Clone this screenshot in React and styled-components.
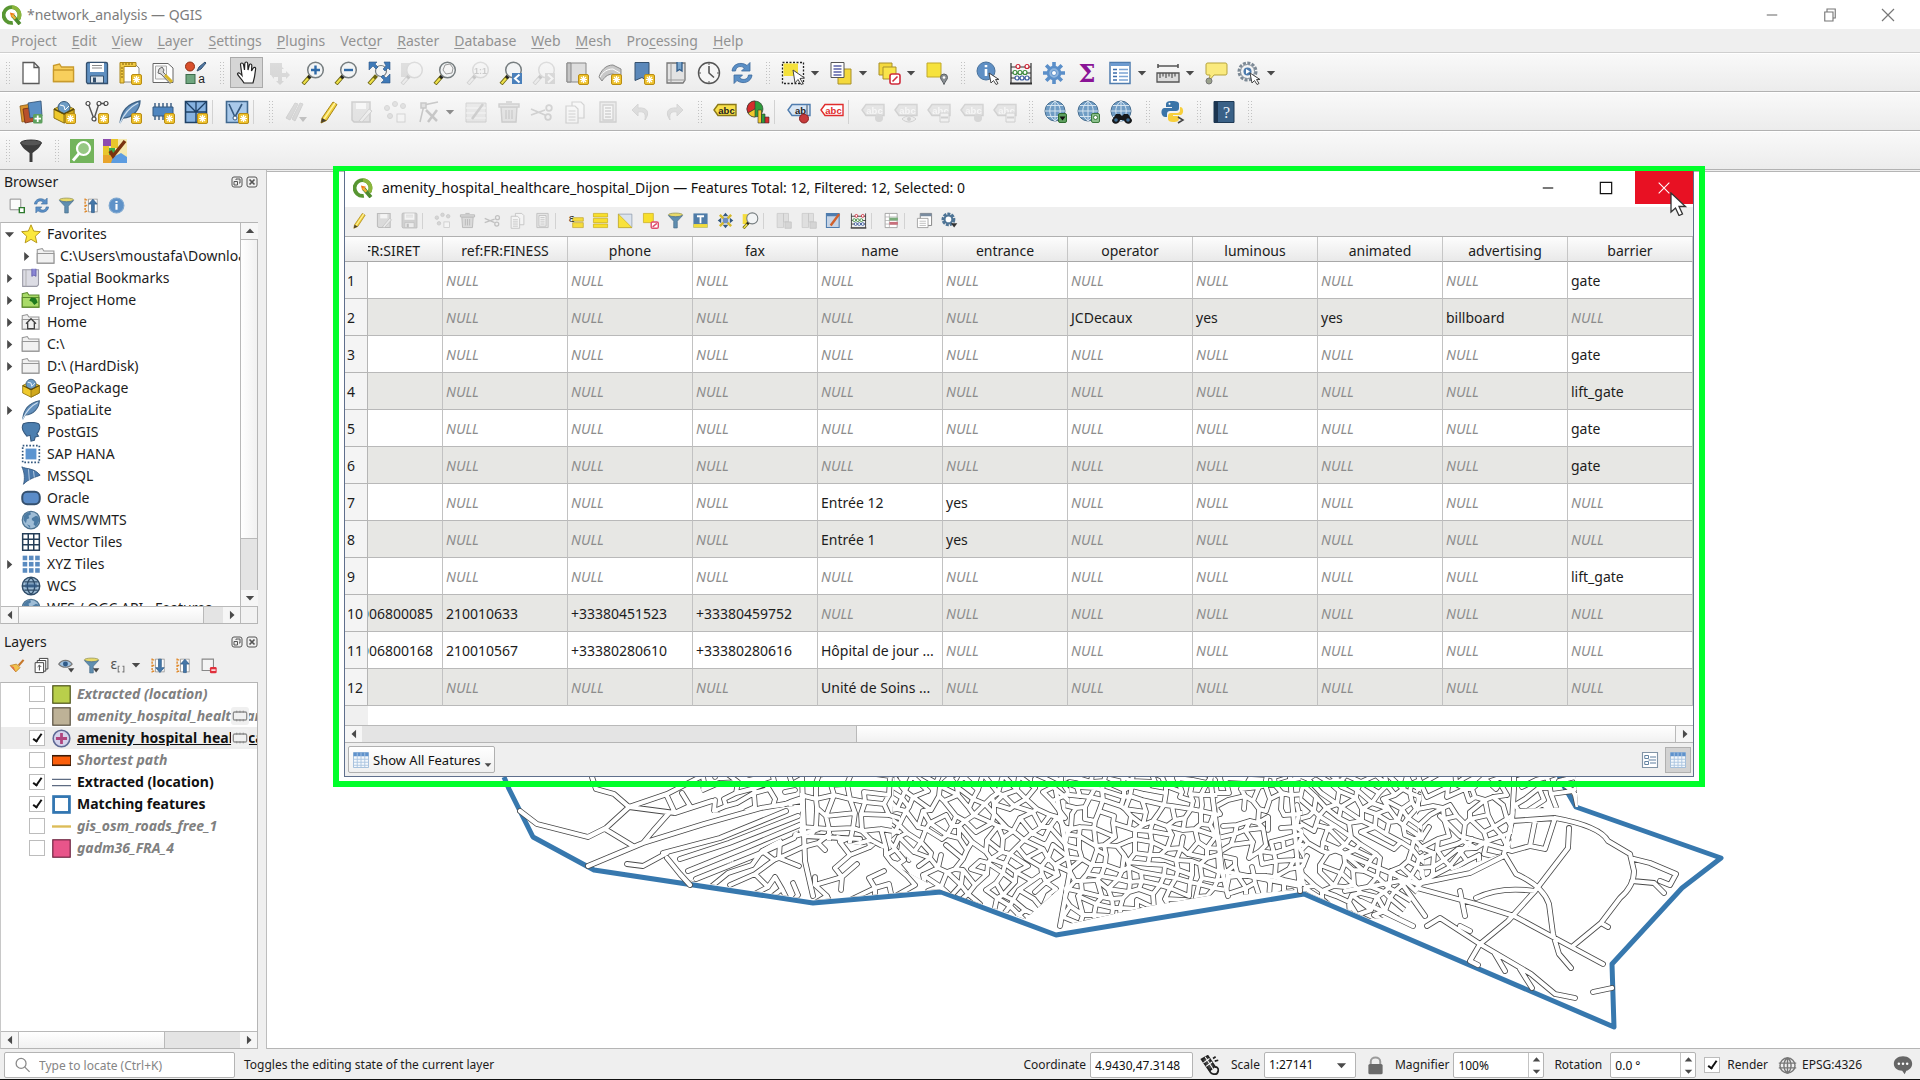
import React from "react";
import styled, { createGlobalStyle } from "styled-components";

const Global = createGlobalStyle`
  *, *::before, *::after { box-sizing: border-box; }
  body { margin: 0; background: #efefef; }
  body, button, input, select, table { font-family: "Noto Sans", "Open Sans", sans-serif; font-size: 14px; line-height: 18px; color: #1c1c1c; }
  button { padding: 0; border: 0; background: none; display: flex; align-items: center; justify-content: center; }
  svg { display: block; flex: none; }
`;

/* ---------- icons, all on a 24 unit square ---------- */

const star = (
  <g>
    <rect x="13.500" y="13.500" width="10" height="10" rx="1.500" fill="#eec22e" stroke="#b98d14" />
    <path d="M18.500 15v7M15 18.500h7M16 16l5 5M21 16l-5 5" stroke="#fff" strokeWidth="1.200" />
  </g>
);
const lens = (
  <g>
    <path d="M9.500 14.500L2 23" stroke="#6b6410" strokeWidth="4" />
    <path d="M7 17.500L2.500 22.500" stroke="#eee04a" strokeWidth="2.200" />
    <path d="M10.500 13.500L7.500 17" stroke="#222" strokeWidth="3.400" />
    <circle cx="14.500" cy="9" r="7.800" fill="#f2f4f5" stroke="#777e80" strokeWidth="1.500" />
  </g>
);
const pointer = <path d="M12 9l2 13 3-3.500 3 5 2-1-3-5 4.500-.5z" fill="#fff" stroke="#444" />;
const globe = (
  <g>
    <circle cx="11" cy="11" r="10" fill="#6f9cc4" stroke="#466d8f" />
    <path d="M1 11h20M3 5.500h16M3 16.500h16M11 1v20M11 1c-7 5-7 15 0 20M11 1c7 5 7 15 0 20" fill="none" stroke="#d5e4f0" strokeWidth="1" />
  </g>
);
const world = (
  <g>
    <circle cx="12" cy="12" r="10.500" fill="#9fbdd6" stroke="#4d7391" strokeWidth="1.500" />
    <path d="M3 8c2-4 5-5 8-6l1 3-3 2 1 3-3 1-1 5-3-4zM13 10l5-3 3 1 1 5-4 7-3-3 1-3-3-2zM7 17l4 2 0 3z" fill="#4c7ba3" />
  </g>
);
const doc = <path d="M4 1.500h11l5 5v16H4z M15 1.500v5h5" fill="#fff" stroke="#5a5a5a" strokeWidth="1.300" />;
const folder = (fill, line) => (
  <g fill={fill} stroke={line} strokeWidth="1.300">
    <path d="M1.500 20.500V4.500l6-1.500 2 3h12v14.500z" />
    <path d="M1.500 20.500V9h20v11.500z" />
  </g>
);
const abacus = (
  <g fill="none">
    <path d="M2 2v20M22 2v20M2 6h20M2 12h20M2 17h20" stroke="#333" strokeWidth="1.200" />
    <path d="M1 22.500h22" stroke="#333" strokeWidth="2" />
    <g strokeWidth="1.200" fill="#fff">
      <g stroke="#cc2233"><circle cx="9" cy="5.500" r="2" /><circle cx="18" cy="5.500" r="2" /></g>
      <g stroke="#3a8a3a"><circle cx="6" cy="11.500" r="2" /><circle cx="11" cy="11.500" r="2" /><circle cx="16" cy="11.500" r="2" /></g>
      <g stroke="#3a5aa0"><circle cx="8" cy="17" r="2" /><circle cx="13" cy="17" r="2" /><circle cx="18" cy="17" r="2" /></g>
    </g>
  </g>
);
const pencil = (
  <g>
    <path d="M5 18L16 2l4 2.500L9.500 20.500 4 23z" fill="#f0cf3a" stroke="#a8851a" />
    <path d="M7 19L18 3" stroke="#fff3a0" strokeWidth="1.500" />
    <path d="M5 18l4.500 2.500L4 23z" fill="#4a4030" />
  </g>
);
const tableIcon = (
  <g>
    <rect x="2" y="1.500" width="20" height="21" fill="#fff" stroke="#4f7cae" strokeWidth="1.500" />
    <rect x="3" y="2" width="18" height="3" fill="#6d9bd0" />
    <path d="M5 8.500h4M5 12h4M5 15.500h4M5 19h4" stroke="#3c6daa" strokeWidth="1.500" />
    <path d="M11 8.500h9M11 12h9M11 15.500h9M11 19h9" stroke="#7ba4d4" strokeWidth="1.300" />
  </g>
);
const arrows = (
  <g fill="#5a8fc6" stroke="#3d6a9c" strokeWidth=".8">
    <path d="M2 10C2.500 3 11 0 17 4.500L20 1.500V10h-8.500l3-3C10 4 6 6 5.500 10z" />
    <path d="M22 14c-.5 7-9 10-15 5.500L4 22.500V14h8.500l-3 3c4.500 3 8.500 1 9-3z" />
  </g>
);
const funnel = (
  <g>
    <ellipse cx="12" cy="4" rx="10" ry="2.500" fill="#e8da6a" stroke="#8d8d55" />
    <path d="M2 5l7.500 8v9.500h5V13L22 5c-4 2.500-16 2.500-20 0z" fill="#5f8eb0" stroke="#4b708c" />
  </g>
);
const arrowSquare = (d) => (
  <g>
    <path d="M3 2v20M3 4h5M3 12h5M3 20h5" stroke="#e08a2c" strokeWidth="2" strokeDasharray="3 1.500" />
    <rect x="8" y="3" width="12" height="18" fill="#fff" stroke="#8a8a8a" />
    <path d={d} fill="#4577a8" stroke="#2f5a88" />
  </g>
);
const feather = (
  <g>
    <path d="M2 23C3 13 8 4 22 1c0 8-7 17-17 17z" fill="#6390bd" stroke="#3f6386" strokeWidth="1.300" />
    <path d="M2 23C6 14 12 7 20 3" stroke="#cfe0ef" fill="none" strokeWidth="1.300" />
  </g>
);
const tagShape = (fill, line, txt, label = "abc") => (
  <g>
    <path d="M1 10l4-5.500h18v11H5z" fill={fill} stroke={line} strokeWidth="1.400" />
    <text x="13.500" y="13.500" fontFamily="Liberation Sans, sans-serif" fontSize="9.500" fontWeight="700" textAnchor="middle" fill={txt}>{label}</text>
  </g>
);
const box = (
  <g strokeWidth="1">
    <path d="M2 9l10-5 10 5v9l-10 5-10-5z" fill="#efc92c" stroke="#8d7214" />
    <path d="M12 14v9l10-5V9z" fill="#d1a81c" stroke="#8d7214" />
    <circle cx="12" cy="7.500" r="6" fill="#6e9dc6" stroke="#37597a" />
    <path d="M8 5l4 1 1 4 4-4" stroke="#fff" fill="none" />
    <path d="M2 9l10 5 10-5" fill="none" stroke="#5e4c0c" strokeWidth="1.500" />
  </g>
);

const icons = {
  logo: (
    <g fill="none">
      <path d="M19.500 17A9.500 9.500 0 1 0 13 21.400" stroke="#589632" strokeWidth="4.500" />
      <path d="M19.500 17A9.500 9.500 0 0 0 12 2.500" stroke="#8bb53c" strokeWidth="4.500" />
      <path d="M13 13l8.500 10" stroke="#4d8a2d" strokeWidth="4.500" />
      <path d="M9.500 9l6 1.500-4.500 4.500z" fill="#ee7913" />
      <path d="M12 12l4 4.500" stroke="#f0b23a" strokeWidth="3" />
    </g>
  ),
  newDoc: doc,
  open: folder("#f8cf5c", "#c89a2c"),
  save: (
    <g>
      <path d="M1.500 3c0-1 .5-1.500 1.500-1.500h18c1 0 1.500.5 1.500 1.500v19.500h-20L1.500 21z" fill="#5f8fc0" stroke="#34506e" strokeWidth="1.300" />
      <path d="M5 2h14v9H5z" fill="#fff" />
      <path d="M7 4.500h10M7 7h10" stroke="#888" />
      <path d="M5.500 15h13v7h-13z" fill="#dfe6ec" stroke="#34506e" />
      <path d="M8 16.500h3v5H8z" fill="#34506e" />
    </g>
  ),
  newLayout: (
    <g>
      <path d="M5 3h12l4 4v14H5z" fill="#fff" stroke="#8a8a8a" />
      <path d="M2 1.500h16v4H6V22H2z" fill="#f1cb46" stroke="#a98418" />
      <path d="M5 2v2M8 2v2M11 2v2M14 2v2M3 7h2M3 10h2M3 13h2M3 16h2" stroke="#806010" />
      {star}
    </g>
  ),
  layoutManager: (
    <g>
      <path d="M2 2.500h15l5 4.500v14.500H2z" fill="#fff" stroke="#666" />
      <path d="M4.500 5h11v13h-11z" fill="#f4f4f4" stroke="#aaa" />
      <path d="M8 8l3-2 2 3-1 2 9 9-2 2.500-9-9.500-3-1z" fill="#d8d8d8" stroke="#666" />
      <path d="M14 14l7 7" stroke="#d8b72a" strokeWidth="3" />
    </g>
  ),
  styleManager: (
    <g>
      <circle cx="6" cy="5.500" r="4.500" fill="#d9502c" stroke="#8f2e14" />
      <path d="M13 10l2-4 6-5 1 1-5 6z" fill="#5079a8" stroke="#34506e" />
      <rect x="2" y="13.500" width="9" height="9" fill="#6fa67f" stroke="#3c6a4a" />
      <text x="17.500" y="22" fontFamily="Liberation Sans, sans-serif" fontSize="12" textAnchor="middle" fill="#222">a</text>
    </g>
  ),
  hand: <path d="M9 22c-2-4-6-7-6.500-9 .5-2 2.500-1 4.500 1.500L5.500 3.500C5.500 1.500 8 1.500 8.500 3.500L9.500 9l.3-6.500c.3-2 2.700-2 2.900 0L13 9l1.300-5c.6-1.600 2.600-1.200 2.500.6L16.500 10l1.800-3c1-1.300 2.600-.6 2.300 1L19.500 16 18 22z" fill="#fff" stroke="#222" strokeWidth="1.200" />,
  panSel: (
    <g fill="#777">
      <rect x="2" y="2" width="12" height="12" />
      <path d="M13 5l3 3h-2v4h4v-2l4 4-4 4v-2h-4v4h2l-4 4-4-4h2v-4H6v2l-3-4 3-4v2h5V8z" />
    </g>
  ),
  zoomIn: <g>{lens}<path d="M14.500 4.500v9M10 9h9" stroke="#2f6aa8" strokeWidth="2.400" /></g>,
  zoomOut: <g>{lens}<path d="M10 9h9" stroke="#2f6aa8" strokeWidth="2.400" /></g>,
  zoomFull: (
    <g>
      <path d="M9.500 14.500L2 23" stroke="#6b6410" strokeWidth="4" />
      <path d="M7 17.500L2.500 22.500" stroke="#eee04a" strokeWidth="2.200" />
      <circle cx="14" cy="10" r="5.500" fill="#f2f4f5" stroke="#777e80" strokeWidth="1.200" />
      <g fill="#3f7ab8" stroke="#2c5684" strokeWidth=".6">
        <path d="M2 1h8L8 3l3 3-2 2-3-3-4 4zM23 1v8l-2-2-3 3-2-2 3-3-2-4zM23 22h-9l3-3-3-3 2-2 3 3 4-4z" />
      </g>
    </g>
  ),
  zoomSel: <g><rect x="1" y="2" width="12" height="14" fill="#888" />{lens}</g>,
  zoomLayer: <g>{lens}<path d="M12 4l5-1 3 4-1 5-6 1-3-4z" fill="#f5f5f5" stroke="#999" /></g>,
  zoomNative: <g>{lens}<text x="14.500" y="12.500" fontFamily="Liberation Sans, sans-serif" fontSize="9" fontWeight="700" textAnchor="middle" fill="#333">1:1</text></g>,
  zoomLast: <g>{lens}<path d="M13 12h10v11H13z" fill="#4a80bb" /><path d="M20.500 13.500l-4.500 4 4.500 4" stroke="#fff" strokeWidth="2" fill="none" /></g>,
  zoomNext: <g>{lens}<path d="M13 12h10v11H13z" fill="#777" /><path d="M16 13.500l4.500 4-4.500 4" stroke="#fff" strokeWidth="2" fill="none" /></g>,
  newMap: <g><path d="M2 2h19v19H2z" fill="#dedede" stroke="#888" /><path d="M2 2h4v19H2z" fill="#c5c5c5" stroke="#888" />{star}</g>,
  new3d: <g><path d="M1 16C3 9 8 4 15 4l8 4v9l-8-4c-6 0-9 4-11 7z" fill="#c8c8c8" stroke="#8a8a8a" /><path d="M2 16c3-5 7-8 13-8l7 4" stroke="#fff" fill="none" />{star}</g>,
  newBookmark: <g><path d="M4 1.500h14v20l-7-5-7 3z" fill="#5b88ba" stroke="#34506e" />{star}</g>,
  bookmarks: (
    <g>
      <path d="M3 2h18v17l-2 3H3z" fill="#e3e3e3" stroke="#777" strokeWidth="1.300" />
      <path d="M7 2v20M3 19h18" stroke="#999" />
      <path d="M13 1v9l2.500-1.500L18 10V1" fill="#7aa5cc" stroke="#2f5a88" strokeWidth="1.300" />
    </g>
  ),
  bookmarkBook: (
    <g>
      <path d="M2 2h19v18l-2 2H2z" fill="#dcdce4" stroke="#9a9aa6" strokeWidth="1.300" />
      <path d="M6 2v20" stroke="#aaa" />
      <path d="M13 1v9l2.500-1.500L18 10V1" fill="#8a86d4" stroke="#5f5aa8" />
    </g>
  ),
  clock: <g fill="none" stroke="#555"><circle cx="12" cy="12" r="10.500" fill="#f6f6f6" strokeWidth="1.400" /><path d="M12 5v7l5 4.500" strokeWidth="1.600" /><path d="M12 2v2M12 20v2M2 12h2M20 12h2" /></g>,
  refresh: arrows,
  select: <g><path d="M1.500 1.500h21v21h-21z" fill="none" stroke="#222" strokeWidth="1.300" strokeDasharray="2 1.500" /><path d="M2.500 2.500H17V15H2.500z" fill="#f4e13c" />{pointer}</g>,
  selectValue: <g><path d="M9 8h13v15H9z" fill="#f4d93c" stroke="#a8902a" /><path d="M2 1.500h13v15H2z" fill="#fff" stroke="#555" /><path d="M4.500 5h8M4.500 8h8M4.500 11h8M4.500 14h8" stroke="#5a62a8" strokeWidth="1.300" /></g>,
  deselect: <g><path d="M2 2h13v12H2z" fill="#f4d93c" stroke="#a8902a" /><path d="M6 6h13v12H6z" fill="#f9e44a" stroke="#a8902a" /><rect x="13" y="13" width="10" height="10" rx="2" fill="#fff" stroke="#d02c3c" strokeWidth="1.600" /><path d="M15.500 20.500l5-5" stroke="#d02c3c" strokeWidth="1.600" /></g>,
  selectLoc: <g><path d="M2 2h14v14H2z" fill="#f6e23c" stroke="#c0a82a" /><path d="M19 23.500c-1-3-3.500-5-3.500-7a3.500 3.500 0 0 1 7 0c0 2-2.500 4-3.500 7z" fill="#8a8f93" stroke="#5a5f63" /><circle cx="19" cy="16.500" r="1.300" fill="#fff" /></g>,
  identify: <g><circle cx="10" cy="10" r="9" fill="#5f8fc4" stroke="#49729c" /><path d="M10 8v7M10 4v2.200" stroke="#fff" strokeWidth="2.600" /><path d="M13 12l2 10 2.500-2.500 2.500 4 2-1-2.500-4h3.500z" fill="#fff" stroke="#444" /></g>,
  abacus,
  gear: (
    <g stroke="#5b8fc9" fill="none">
      <path d="M12 1v22M1 12h22M4.200 4.200l15.600 15.600M19.800 4.200L4.200 19.800" strokeWidth="3.600" />
      <circle cx="12" cy="12" r="6" fill="#8fb5de" strokeWidth="2.500" />
      <circle cx="12" cy="12" r="2.500" fill="#fff" strokeWidth="1" />
    </g>
  ),
  sigma: <text x="12" y="21" fontFamily="DejaVu Serif, serif" fontSize="24" fontWeight="700" textAnchor="middle" fill="#8a1496">Σ</text>,
  table: tableIcon,
  tableGrid: (
    <g>
      <path d="M2 2h20v20H2z" fill="#f4f8fc" stroke="#8fb0d4" />
      <path d="M2 2h20v5H2z" fill="#5f92cc" />
      <path d="M2 11h20M2 15h20M2 19h20M7 2v20M12 2v20M17 2v20" stroke="#a9c4e0" strokeWidth="1.200" />
    </g>
  ),
  measure: <g stroke="#555"><path d="M2 5h20M2 3v4M22 3v4" strokeWidth="1.600" /><path d="M1 12h22v9H1z" fill="#ddd" strokeWidth="1.300" /><path d="M4 12v5M7 12v3.500M10 12v5M13 12v3.500M16 12v5M19 12v3.500" strokeWidth="1.200" /></g>,
  tip: <g><path d="M4 2h17c1.500 0 2 .5 2 2v8c0 1.500-.5 2-2 2H10l-5 6 1-6H4c-1.500 0-2-.5-2-2V4c0-1.500.5-2 2-2z" fill="#faea7e" stroke="#b5a33c" /><circle cx="5" cy="20" r="3" fill="#9aa18c" stroke="#777" /></g>,
  action: <g fill="none"><circle cx="10.500" cy="10.500" r="8.500" stroke="#7d8a96" strokeWidth="3" strokeDasharray="3 1.400" /><circle cx="10.500" cy="10.500" r="7" fill="#f4f4f4" stroke="#7d8a96" /><circle cx="10.500" cy="10.500" r="4" fill="#4e7cae" /><path d="M9 8l4 2.500L9 13z" fill="#fff" /><path d="M13 12l2 10 2.500-2.500 2.500 4 2-1-2.500-4h3.500z" fill="#fff" stroke="#444" /></g>,

  dataSource: <g strokeWidth=".8"><path d="M1 6l11-2 2 16-11 2z" fill="#d9922c" stroke="#8a5a14" /><path d="M4 9l12-2v14l-10 2z" fill="#b8502c" stroke="#6d2c14" /><path d="M9 3l13-2 1 15-12 2z" fill="#5b8fc4" stroke="#2c4c70" /><rect x="14" y="14" width="9.500" height="9.500" rx="1.500" fill="#5ea05e" /><path d="M18.700 15.500v6.500M15.500 18.700H22" stroke="#fff" strokeWidth="1.800" /></g>,
  geopackage: box,
  newGeopackage: <g>{box}{star}</g>,
  newShape: <g><path d="M3 3l6 16L14 3.500h6" fill="none" stroke="#555" strokeWidth="1.400" /><g fill="#fff" stroke="#444" strokeWidth="1.200"><circle cx="3" cy="3.500" r="2" /><circle cx="9" cy="19" r="2" /><circle cx="14" cy="3.500" r="2" /><circle cx="21" cy="3.500" r="2" /></g>{star}</g>,
  spatialite: feather,
  newSpatialite: <g>{feather}{star}</g>,
  memory: <g><path d="M4 3v17M8 3v17M12 3v17M16 3v17M20 3v17" stroke="#35597f" strokeWidth="1.400" /><path d="M2 7h20v9H2z" fill="#4f86c0" stroke="#35597f" />{star}</g>,
  mesh: <g><path d="M1.500 1.500h21v21h-21z" fill="#86b2e0" stroke="#1f4166" strokeWidth="1.600" /><path d="M1.500 12h21M12 12v10.500M1.500 1.500L12 12 22.500 1.500M12 1.500V12" stroke="#1f4166" fill="none" strokeWidth="1.300" />{star}</g>,
  virtual: <g><path d="M1.500 1.500h21v21h-21z" fill="#a9c9ea" stroke="#40688f" strokeWidth="1.600" /><path d="M4 4l6 13 7-13" stroke="#35597f" fill="none" strokeWidth="1.600" /><circle cx="10" cy="18" r="2" fill="#fff" stroke="#35597f" />{star}</g>,
  pencils: <g><path d="M2 18L11 3l3 1-8 16zM8 19L16 3l3 1-8 17z" fill="#777" stroke="#555" /><path d="M15 17h8l-4 5z" fill="#111" /></g>,
  pencil,
  saveEdits: <g><path d="M2 2h18v20H4l-2-2z" fill="#aaa" stroke="#444" strokeWidth="1.500" /><path d="M6 3h10v6H6z" fill="#fff" /><path d="M9 21L19 9l3 2-10 11z" fill="#ddd" stroke="#555" /></g>,
  addPoints: <g fill="#999" stroke="#666"><circle cx="4" cy="8" r="2.500" /><circle cx="12" cy="4" r="2.500" /><circle cx="20" cy="6" r="2.500" /><circle cx="7" cy="16" r="2.500" /><rect x="14" y="14" width="8" height="8" fill="#fff" /></g>,
  vertex: <g stroke="#777" fill="none" strokeWidth="1.500"><path d="M4 22L8 5l14-3" /><rect x="5" y="3" width="5" height="5" fill="#bbb" /><path d="M10 10l11 11M21 10l-9 12" strokeWidth="2.500" /></g>,
  multiEdit: <g><path d="M2 3h20v19H2z" fill="#bbb" stroke="#555" /><path d="M2 8h20M2 13h20M2 18h20" stroke="#fff" /><path d="M8 19L19 4" stroke="#444" strokeWidth="2.500" /></g>,
  trash: <g fill="#aaa" stroke="#444" strokeWidth="1.400"><path d="M4 7h16l-1 15H5z" /><path d="M2 4h20v3H2zM9 2h6" /><path d="M9 10v9M12 10v9M15 10v9" /></g>,
  cut: <g stroke="#555" strokeWidth="1.800" fill="none"><path d="M1 9l14 6M1 15l14-5" /><circle cx="19" cy="8" r="2.800" /><circle cx="18" cy="17" r="2.800" /></g>,
  copy: <g fill="#fff" stroke="#555" strokeWidth="1.200"><path d="M9 2h9l3 3v13H9z" /><path d="M3 6h9l3 3v14H3z" /><path d="M5.500 11h7M5.500 14h7M5.500 17h7M5.500 20h7" /></g>,
  paste: <g fill="#fff" stroke="#555" strokeWidth="1.300"><path d="M4 2h16v20H4z" fill="#ccc" /><path d="M7 5h10v15H7z" /><path d="M9 8h6M9 11h6M9 14h6M9 17h6" /></g>,
  undo: <path d="M9 4L3 10l6 6v-4c6-1 8 1 7 8 5-7 3-13-7-12z" fill="#888" stroke="#666" />,
  redo: <path d="M15 4l6 6-6 6v-4c-6-1-8 1-7 8-5-7-3-13 7-12z" fill="#888" stroke="#666" />,
  label: tagShape("#f7e04a", "#8a7818", "#222"),
  diagram: <g strokeWidth=".6" stroke="#333"><circle cx="9" cy="9" r="8" fill="#2f9c3c" /><path d="M9 9V1a8 8 0 0 0-7 12z" fill="#d42c2c" /><path d="M9 9L2 13a8 8 0 0 0 7 4z" fill="#efc92c" /><path d="M12 10h3.500v13H12z" fill="#efc92c" /><path d="M15.500 14H19v9h-3.500z" fill="#2f9c3c" /><path d="M19 17h4v6h-4z" fill="#d42c2c" /></g>,
  labelPin: <g>{tagShape("#d8e6f5", "#4f7cae", "#222", "ab")}<circle cx="17" cy="18.500" r="4.500" fill="#c63a3a" stroke="#8a1e1e" /><path d="M20 5v10" stroke="#7a8896" strokeWidth="1.600" /></g>,
  labelRed: tagShape("#fff", "#e02c2c", "#e02c2c"),
  labelDim: <g>{tagShape("#aaa", "#555", "#fff")}<circle cx="18" cy="18" r="4" fill="#777" /></g>,
  labelDim2: <g>{tagShape("#aaa", "#555", "#fff")}<path d="M8 19c4-4 10-4 14 0-4 4-10 4-14 0z" fill="#ddd" stroke="#555" /><circle cx="15" cy="19" r="2" fill="#555" /></g>,
  labelDim3: <g>{tagShape("#aaa", "#555", "#fff")}<path d="M13 13h9v9h-9z" fill="#eee" stroke="#555" /><path d="M14 17.500h7" stroke="#555" strokeWidth="2" /></g>,
  osmDown: <g>{globe}<rect x="14.500" y="13.500" width="8" height="9" rx="1.500" fill="#5ea05e" stroke="#2e6a2e" /><path d="M15.500 16.500h6l-3 4z" fill="#111" /></g>,
  osmFind: <g>{globe}<rect x="14.500" y="13.500" width="8" height="9" rx="1.500" fill="#8cc08c" stroke="#3c7a3c" /><circle cx="18.500" cy="17.500" r="2" fill="#fff" stroke="#3c7a3c" /></g>,
  binoculars: <g>{globe}<path d="M6 14h4l2 2 2-2h4l4 6c0 5-7 5-8 0h-4c-1 5-8 5-8 0z" fill="#16181a" /><circle cx="6" cy="20" r="1.800" fill="#3f6f96" /><circle cx="18" cy="20" r="1.800" fill="#3f6f96" /></g>,
  python: <g><path d="M11 1c-5 0-6 1-6 4v2h6v1H3c-4 1-3 9 1 9h2v-3c0-2 1-3 3-3h6c2 0 3-1 3-3V4c0-2-2-3-7-3z" fill="#3a74a8" /><path d="M12 22c5 0 6-1 6-4v-2h-6v-1h8c3-1 3-8-1-8v3c0 2-1 3-3 3h-6c-2 0-3 1-3 3v3c0 2 2 3 5 3z" fill="#f7cf3c" /><circle cx="8.500" cy="3.800" r="1" fill="#fff" /><path d="M17 17l5 3-5 3" stroke="#444" strokeWidth="1.500" fill="none" /></g>,
  help: <g><path d="M2 1.500h20v21H2z" fill="#3a6187" stroke="#1f3a55" /><path d="M2 1.500h4v21H2z" fill="#1c3550" /><text x="14.500" y="18" fontFamily="Liberation Serif, serif" fontSize="16" textAnchor="middle" fill="#e8f0f8">?</text></g>,
  filterDark: <g><ellipse cx="12" cy="4" rx="10.500" ry="3" fill="#555" stroke="#333" /><path d="M1.500 4.500C3 9 8 12 10.500 14v9h3v-9C16 12 21 9 22.500 4.500c-4 3-17 3-21 0z" fill="#3c3c3c" /></g>,
  osmPlace: <g><path d="M0 0h24v24H0z" fill="#73b45c" /><circle cx="13.500" cy="9.500" r="6.500" fill="#97c884" stroke="#fff" strokeWidth="2.200" /><path d="M9 14.500l-6 7" stroke="#fff" strokeWidth="2.800" /></g>,
  collage: <g><path d="M0 0h24v24H0z" fill="#f5e9b0" /><path d="M0 0h8v7H0z" fill="#8c4cb0" /><path d="M8 0h7v9H8z" fill="#e8c62c" /><path d="M0 7h6v9H0z" fill="#e8c62c" /><path d="M6 9h6v9H6z" fill="#3cae4c" /><path d="M0 16h10v8H0z" fill="#e8a42c" /><path d="M10 18l8-4 6 4v6H8z" fill="#5c9ce0" /><path d="M7 12l3 5L22 2" stroke="#7a3410" strokeWidth="3.500" fill="none" /></g>,

  addLayer: <g><path d="M3 3h15v15H3z" fill="#fcfcfc" stroke="#888" strokeWidth="1.300" /><path d="M16 15h7v7h-7z" fill="#fff" stroke="#2e7a2e" strokeWidth="2" /></g>,
  funnel,
  collapse: arrowSquare("M14 3l6 7h-4v12h-4V10H8z"),
  expand: arrowSquare("M14 22l6-7h-4V3h-4v12H8z"),
  info: <g><circle cx="12" cy="12" r="10.500" fill="#5f92c8" stroke="#7fa8d0" strokeWidth="1.500" /><path d="M12 10v8M12 5.500V8" stroke="#fff" strokeWidth="3" /></g>,
  star: <path d="M12 1l3.200 7.500 8 .7-6 5.400 1.800 8L12 18.400l-7 4.200 1.800-8-6-5.400 8-.7z" fill="#fbe83c" stroke="#b89a1c" strokeWidth="1.200" />,
  folder: folder("#f1f1f1", "#979797"),
  projectHome: <g>{folder("#a9db68", "#5c8a2c")}<path d="M12 9l6 1 2 5-4 3-3-4-3-1z" fill="#1f7a1f" /></g>,
  home: <g>{folder("#f1f1f1", "#979797")}<path d="M6 14l6-6 6 6M8 13v7h8v-7" fill="none" stroke="#444" strokeWidth="1.600" /></g>,
  postgis: <path d="M3 2c5-2 14-2 18 0 3 3 1 9-2 12l2 3-4 1-1 4-4 1-1-7-4 1-3-4C1 9 1 5 3 2z" fill="#4c7fb0" stroke="#35597f" strokeWidth="1.300" />,
  hana: <g><path d="M2 2h20v20H2z" fill="none" stroke="#35597f" strokeWidth="2" strokeDasharray="2 2" /><path d="M5.500 5.500h13v13h-13z" fill="#5b94d0" /></g>,
  mssql: <g><path d="M1 1c5 3 15 1 22 10-4 2-14 4-20 11 2-7 1-15-2-21z" fill="#4b79ab" stroke="#35597f" /><path d="M9 4l1 13M15 6l1 8" stroke="#c7d9ea" /></g>,
  oracle: <rect x="1.500" y="4.500" width="21" height="15" rx="6" fill="#5b8cc8" stroke="#35506e" strokeWidth="2.400" />,
  world,
  grid: <path d="M2 2h20v20H2zM8.700 2v20M15.300 2v20M2 8.700h20M2 15.300h20" fill="#fff" stroke="#253e58" strokeWidth="1.800" />,
  tiles: <g fill="#5a8bc0">{[2, 9.5, 17].map((y) => [2, 9.5, 17].map((x) => <rect key={`${x}-${y}`} x={x} y={y} width="5.500" height="5.500" />))}</g>,
  wcs: <g><circle cx="12" cy="12" r="10.500" fill="#9dbbd3" stroke="#2f4c68" strokeWidth="1.700" /><path d="M1.500 12h21M4 7h16M4 17h16M12 2c-6 5-6 15 0 20M12 2c6 5 6 15 0 20" stroke="#2f4c68" fill="none" strokeWidth="1.600" /><path d="M5 9h14v5H5z" fill="#2f5a88" opacity=".6" /></g>,

  brush: <g><path d="M22 4l-7 8" stroke="#c6782c" strokeWidth="3" /><path d="M3 12l9-2 5 5-6 6z" fill="#f2c24c" stroke="#b57a1c" /><path d="M3 12l5 2 3 7" fill="#e06a4c" /></g>,
  group: <g fill="#fff" stroke="#444" strokeWidth="1.400"><path d="M9 2h12v15H9z" /><path d="M6 5h12v15H6z" /><path d="M3 8h12v14H3z" /><path d="M9 19v-7M6.500 14L9 11.500l2.500 2.500" /></g>,
  eye: <g><path d="M1 10c5-7 14-7 19 0-5 6-14 6-19 0z" fill="#9dc0e0" stroke="#777" strokeWidth="1.500" /><circle cx="10.500" cy="10" r="3.500" fill="#2f5a88" /><path d="M14 16h9l-4.500 6z" fill="#444" /></g>,
  funnelMenu: <g>{funnel}<path d="M14 16h9l-4.500 6z" fill="#444" /></g>,
  epsilon: <g><text x="7" y="17" fontFamily="DejaVu Sans, sans-serif" fontSize="19" textAnchor="middle" fill="#555">ε</text><path d="M15 13h-2v8h2M19 13h2v8h-2" stroke="#777" strokeWidth="1.500" fill="none" /></g>,
  removeLayer: <g><path d="M3 3h16v16H3z" fill="#f4f4f4" stroke="#888" strokeWidth="1.500" /><rect x="14" y="14" width="9.500" height="9" rx="2" fill="#e0303c" /><path d="M16 18.500h6" stroke="#fff" strokeWidth="2" /></g>,

  expression: <g><path d="M8 8h15v5H8zM8 15h15v7H8z" fill="#f5dc3c" stroke="#c0a42c" /><text x="6.500" y="14" fontFamily="DejaVu Sans, sans-serif" fontSize="16" textAnchor="middle" fill="#333">ε</text></g>,
  selectAll: <path d="M2 2h20v5H2zM2 9h20v6H2zM2 17h20v5H2z" fill="#f8df2c" stroke="#c8ac1c" />,
  invert: <g><path d="M2 3h19v19H2z" fill="#dbe3ee" stroke="#8a96a8" /><path d="M2 3v19h19z" fill="#f8e23c" stroke="#c8ac1c" /></g>,
  deselectSmall: <g><path d="M2 2h14v13H2z" fill="#f8df2c" stroke="#c8ac1c" /><rect x="13" y="14" width="10" height="9" rx="2" fill="#fff" stroke="#e04c6c" strokeWidth="2" /><path d="M15 21l6-5" stroke="#e04c6c" strokeWidth="2" /></g>,
  moveTop: <g><path d="M2 2h20v20H2z" fill="#4f7ca8" /><path d="M2 17h20v5H2z" fill="#f1dc3c" /><path d="M7 6h10M12 6v10" stroke="#fff" strokeWidth="2.500" /></g>,
  panTo: <g fill="#35597f"><path d="M12 1l4 5h-8zM12 23l4-5h-8zM1 12l5-4v8zM23 12l-5-4v8z" /><path d="M8 8h8v8H8z" fill="#6f8fc0" /><path d="M4 4l5 5M20 4l-5 5M4 20l5-5M20 20l-5-5" stroke="#d6b92c" strokeWidth="3.500" /></g>,
  zoomTo: <g><path d="M1 3h12v14H1z" fill="#f5dc3c" />{lens}</g>,
  newField: <g><path d="M3 2h9v20H3zM12 2h7v12h-7z" fill="#bbb" stroke="#666" /><path d="M14 14h9v9h-9z" fill="#999" stroke="#555" /></g>,
  editField: <g><path d="M2 2h18v20H2z" fill="#c6d4e6" stroke="#4f7cae" strokeWidth="1.500" /><path d="M2 2h18v4H2z" fill="#4f7cae" /><path d="M8 19L20 3" stroke="#d0602c" strokeWidth="3.500" /></g>,
  conditional: <g><path d="M3 2h17v20H3z" fill="#fff" stroke="#888" /><path d="M3 7h17M3 12h17M3 17h17M9 2v20" stroke="#aaa" /><path d="M9 8h12v4H9z" fill="#7aac7a" /><path d="M9 14h12v4H9z" fill="#c8707c" /></g>,
  dock: <g><path d="M6 2h16v17H6z" fill="#fff" stroke="#888" strokeWidth="1.400" /><path d="M6 2h16v4H6z" fill="#7a8ca0" /><path d="M2 9h15v13H2z" fill="#fff" stroke="#999" strokeWidth="1.200" /><path d="M5 13h9M5 16h9M5 19h9" stroke="#aaa" /></g>,
  actionMenu: <g fill="none"><circle cx="10.500" cy="10.500" r="7.500" stroke="#4f7596" strokeWidth="4.500" strokeDasharray="4 1.500" /><circle cx="10.500" cy="10.500" r="5.500" stroke="#4f7596" strokeWidth="3" fill="#fff" /><path d="M14 16h9l-4.500 6z" fill="#333" /></g>,
  form: <g><path d="M2 2h20v20H2z" fill="#fff" stroke="#8294a6" strokeWidth="1.500" /><path d="M5 6h5v4H5zM5 14h5v4H5z" fill="none" stroke="#5f7f9f" strokeWidth="1.300" /><path d="M12 8h8M12 16h8M10 12h10" stroke="#5f7f9f" strokeWidth="1.500" /></g>,

  min: <path d="M5 12h14" stroke="currentColor" strokeWidth="1.500" />,
  restore: <path d="M5 8h11v12H5zM8 8V4h11v12h-3" fill="none" stroke="currentColor" strokeWidth="1.500" />,
  max: <path d="M3.500 3.500h17v17h-17z" fill="none" stroke="currentColor" strokeWidth="1.800" />,
  close: <path d="M4 4l16 16M20 4L4 20" stroke="currentColor" strokeWidth="1.600" />,
  float: <g fill="none" stroke="#555" strokeWidth="2"><rect x="2" y="2" width="20" height="20" rx="4" /><path d="M6 11h7v7H6zM10 8V6h8v8h-2" /></g>,
  dockClose: <g fill="none" stroke="#555" strokeWidth="2"><rect x="2" y="2" width="20" height="20" rx="4" /><path d="M7 7l10 10M17 7L7 17" strokeWidth="3.500" /></g>,
  right: <path d="M7 2l11 10L7 22z" fill="#4a4a4a" />,
  left: <path d="M17 2L6 12l11 10z" fill="#4a4a4a" />,
  down: <path d="M2 7l10 11L22 7z" fill="#4a4a4a" />,
  up: <path d="M2 17L12 6l10 11z" fill="#4a4a4a" />,
  search: <g fill="none" stroke="#8a8a8a" strokeWidth="1.800"><circle cx="10" cy="9" r="7" /><path d="M15 14l7 7" /></g>,
  mouse: <g fill="none" stroke="#222" strokeWidth="2"><path d="M3 5l7-4 8 12-6 5z" fill="#444" /><path d="M5 9l7-5M8 13l7-5M7 2l9 14" stroke="#fff" strokeWidth="1.200" /><path d="M12 16c0 7 9 8 10 2 .5-3-2-5-4-4" /><path d="M16 4l3-2M18 7l4-1" /></g>,
  lock: <g><path d="M6 11V7c0-7 12-7 12 0v4" fill="none" stroke="#9a9a9a" strokeWidth="2.500" /><rect x="3" y="10" width="18" height="13" rx="2" fill="#6a6a6a" /></g>,
  crs: <g fill="none" stroke="#777" strokeWidth="1.800"><circle cx="12" cy="12" r="9.500" /><path d="M1 9h22M1 15h22M12 2v20M12 2c-6 5-6 15 0 20M12 2c6 5 6 15 0 20" /></g>,
  messages: <g><path d="M12 1.500c6.500 0 11 4 11 9 0 4-3 7.500-7 8.500l-2 4-3-4C5 18.500 1 15.500 1 10.500c0-5 4.500-9 11-9z" fill="#666" /><g fill="#fff"><circle cx="7" cy="10.500" r="1.500" /><circle cx="12" cy="10.500" r="1.500" /><circle cx="17" cy="10.500" r="1.500" /></g></g>,
  chip: <g fill="none" stroke="#909090" strokeWidth="2"><rect x="2" y="6" width="20" height="12" rx="2" /><path d="M7 4v3M12 4v3M17 4v3M7 17v3M12 17v3M17 17v3" /></g>,
  cursor: <path d="M2 1v19l4.500-4 3.500 7.500 3.500-1.500-3.500-7.500h6.500z" fill="#fff" stroke="#333" strokeWidth="1.300" />,

  swLime: <rect x="1" y="1" width="22" height="22" fill="#b9cf4b" stroke="#4a5216" strokeWidth="1.500" />,
  swTan: <rect x="1" y="1" width="22" height="22" fill="#beb297" stroke="#57503f" strokeWidth="1.500" />,
  swPink: <rect x="1" y="1" width="22" height="22" fill="#e8558a" stroke="#6d2440" strokeWidth="1.500" />,
  swHospital: <g><circle cx="12" cy="12" r="10.500" fill="#d5d3ec" stroke="#5f6a96" strokeWidth="2" /><path d="M12 5v14M5 12h14" stroke="#b0447e" strokeWidth="3.500" /></g>,
  swPath: <rect x="0" y="6" width="24" height="12" fill="#fb5f0c" stroke="#3c1c08" strokeWidth="2" />,
  swRoad: <path d="M0 8h24M0 16h24" stroke="#5e6b82" strokeWidth="1.400" />,
  swBlue: <rect x="2" y="2" width="20" height="20" fill="#fff" stroke="#3276b1" strokeWidth="3.500" />,
  swYellow: <path d="M0 12h24" stroke="#dcbc58" strokeWidth="3" />,
};

const Icon = ({ name, size = 24 }) => (
  <svg width={size} height={size} viewBox="0 0 24 24" aria-hidden="true">{icons[name]}</svg>
);

/* ---------- shared parts ---------- */

const Page = styled.div`
  position: relative;
  min-height: 100vh;
  display: flex;
  flex-direction: column;
  background: #efefef;
  border-bottom: 2px solid #111;
  overflow: hidden;
`;
const TitleBar = styled.header`
  height: 29px;
  display: flex;
  align-items: center;
  padding: 0 3px 0 2px;
  background: #fff;
  color: #7c7c7c;
`;
const Title = styled.h1`
  flex: 1;
  margin: 0;
  padding-left: ${(p) => (p.$wide ? 9 : 5)}px;
  font-size: 14px;
  line-height: 18px;
  font-weight: 400;
  white-space: nowrap;
`;
const WindowButton = styled.button`
  width: 58px;
  height: ${(p) => (p.$tall ? 33 : 29)}px;
  align-self: flex-start;
  color: ${(p) => (p.$danger ? "#fff" : p.$tall ? "#111" : "#777")};
  background: ${(p) => (p.$danger ? "#e81123" : "transparent")};
`;
const MenuBar = styled.nav`
  height: 24px;
  display: flex;
  gap: 1px;
  padding: 0 4px;
  border-bottom: 1px solid #cfcfcf;
`;
const MenuItem = styled.button`
  padding: 0 7px;
  color: #929292;
  white-space: pre;
  u { text-underline-offset: 2px; }
`;
const Toolbar = styled.div`
  height: 39px;
  display: flex;
  align-items: center;
  border-top: 1px solid #fff;
  border-bottom: 1px solid #b2b2b2;
  background: linear-gradient(#f9f9f9, #ececec);
`;
const Handle = styled.span`
  width: ${(p) => (p.$first ? 14 : 18)}px;
  height: 24px;
  display: flex;
  justify-content: center;
  &::before {
    content: "";
    width: 5px;
    background-image: radial-gradient(#c2c2c2 1px, transparent 1px);
    background-size: 3px 3px;
  }
`;
const Separator = styled.span`
  width: 8px;
  height: ${(p) => (p.$small ? 16 : 24)}px;
  border-left: 1px solid #d2d2d2;
`;
const ToolButton = styled.button`
  width: ${(p) => (p.$menu ? 48 : 33)}px;
  height: 31px;
  gap: 5px;
  background: ${(p) => (p.$on ? "#d5d5d5" : "transparent")};
  box-shadow: ${(p) => (p.$on ? "inset 0 0 0 1px #aaa" : "none")};
  &:disabled svg:first-child { filter: grayscale(1) opacity(.35); }
  &:disabled svg:last-child { opacity: .6; }
`;
const SmallButton = styled.button`
  width: ${(p) => (p.$wide ? 42 : 25)}px;
  height: 25px;
  gap: 5px;
  &:disabled svg { filter: grayscale(1) opacity(.3); }
`;

const Tools = ({ items }) =>
  items.map((it, i) => {
    if (it === "|") return <Separator key={i} />;
    if (it === ":") return <Handle key={i} $first={i === 0} />;
    const menu = it.endsWith("+");
    const off = it.startsWith("-");
    const on = it.startsWith("*");
    const name = it.replace(/[-+*]/g, "");
    return (
      <ToolButton key={i} $menu={menu} $on={on} disabled={off} aria-label={name}>
        <Icon name={name} />
        {menu && <Icon name="down" size={10} />}
      </ToolButton>
    );
  });
const SmallTools = ({ items }) =>
  items.map((it, i) => {
    if (it === "|") return <Separator key={i} $small />;
    const off = it.startsWith("-");
    const wide = it.endsWith("+");
    const name = it.replace(/[-+]/g, "");
    return (
      <SmallButton key={i} disabled={off} $wide={wide} aria-label={name}>
        <Icon name={name} size={17} />
        {wide && <Icon name="down" size={10} />}
      </SmallButton>
    );
  });

const rowOne = [":", "newDoc", "open", "save", "newLayout", "layoutManager", "styleManager", ":", "*hand", "-panSel", "zoomIn", "zoomOut", "zoomFull", "-zoomSel", "zoomLayer", "-zoomNative", "zoomLast", "-zoomNext", "newMap", "new3d", "newBookmark", "bookmarks", "clock", "refresh", ":", "select+", "selectValue+", "deselect+", "selectLoc", ":", "identify", "abacus", "gear", "sigma", "table+", "measure+", "tip", "action+"];
const rowTwo = [":", "dataSource", "newGeopackage", "newShape", "newSpatialite", "memory", "mesh", "|", "virtual", "|", ":", "-pencils", "pencil", "-saveEdits", "-addPoints", "-vertex+", "-multiEdit", "-trash", "-cut", "-copy", "-paste", "-undo", "-redo", ":", "label", "diagram", "|", "labelPin", "labelRed", "|", "-labelDim", "-labelDim2", "-labelDim3", "-labelDim", "-labelDim3", ":", "osmDown", "osmFind", "binoculars", ":", "python", ":", "help", ":"];
const rowThree = [":", "filterDark", ":", "osmPlace", "collage"];
const menus = ["Pro_ject", "_Edit", "_View", "_Layer", "_Settings", "_Plugins", "Vect_or", "_Raster", "_Database", "_Web", "_Mesh", "Pro_cessing", "_Help"];

/* ---------- scroll bars ---------- */

const Bar = styled.div`
  display: flex;
  flex: none;
  flex-direction: ${(p) => (p.$vertical ? "column" : "row")};
  ${(p) => (p.$vertical ? "width: 17px; border-left: 1px solid #b9b9b9;" : "height: 17px; border-top: 1px solid #b9b9b9;")}
  background: #e4e4e4;
`;
const BarButton = styled.button`
  flex: none;
  width: 17px;
  height: 16px;
  background: #f6f6f6;
`;
const Thumb = styled.div`
  background: ${(p) => (p.$vertical ? "linear-gradient(90deg, #fff, #f1f1f1)" : "linear-gradient(#fff, #f1f1f1)")};
  border: solid #b9b9b9;
  border-width: ${(p) => (p.$vertical ? "1px 0" : "0 1px")};
`;
const Groove = styled.div`
  flex: 1;
`;
const Corner = styled.div`
  width: 17px;
  background: #f2f2f2;
  border-left: 1px solid #b9b9b9;
`;
const Scroll = ({ vertical, before, size, end }) => (
  <Bar $vertical={vertical}>
    <BarButton aria-label="Scroll back"><Icon name={vertical ? "up" : "left"} size={10} /></BarButton>
    {before && <Groove />}
    <Thumb $vertical={vertical} style={{ flexBasis: size }} />
    {!before && <Groove />}
    <BarButton aria-label="Scroll on"><Icon name={vertical ? "down" : "right"} size={10} /></BarButton>
    {end && <Corner />}
  </Bar>
);

/* ---------- side docks ---------- */

const Body = styled.main`
  flex: 1;
  min-height: 0;
  display: flex;
`;
const Side = styled.aside`
  width: 267px;
  flex: none;
  display: flex;
  flex-direction: column;
  padding-right: 8px;
  border-right: 1px solid #bdbdbd;
`;
const Dock = styled.section`
  display: flex;
  flex-direction: column;
  ${(p) => (p.$grow ? "flex: 1; margin-top: 6px;" : "height: 454px;")}
`;
const DockHead = styled.div`
  height: 24px;
  display: flex;
  align-items: center;
  gap: 3px;
  padding-left: 4px;
  h2 { flex: 1; margin: 0; font-size: 14px; line-height: 18px; font-weight: 400; }
`;
const DockTools = styled.div`
  height: 28px;
  display: flex;
  align-items: center;
  padding: 0 0 6px 4px;
`;
const ListBox = styled.div`
  flex: 1;
  min-height: 0;
  display: flex;
  flex-direction: column;
  background: #fff;
  border: 1px solid #b5b5b5;
  border-left-color: #c8c8c8;
`;
const ListMain = styled.div`
  flex: 1;
  min-height: 0;
  display: flex;
`;
const Tree = styled.ul`
  flex: 1;
  min-width: 0;
  margin: 0;
  padding: 0;
  list-style: none;
  overflow: hidden;
  height: ${(p) => (p.$clip ? "384px" : "auto")};
`;
const TreeRow = styled.li`
  height: 22px;
  display: flex;
  align-items: center;
  gap: 4px;
  padding-left: ${(p) => (p.$nested ? 20 : 3)}px;
  white-space: nowrap;
  & > svg { visibility: ${(p) => (p.$leaf ? "hidden" : "visible")}; }
`;
const TreeIcon = styled.span`
  width: 24px;
  display: flex;
  justify-content: center;
`;
const tree = [
  ["down", "star", "Favorites"], ["right", "folder", "C:\\Users\\moustafa\\Downloads", true], ["right", "bookmarkBook", "Spatial Bookmarks"],
  ["right", "projectHome", "Project Home"], ["right", "home", "Home"], ["right", "folder", "C:\\"], ["right", "folder", "D:\\ (HardDisk)"],
  ["", "geopackage", "GeoPackage"], ["right", "spatialite", "SpatiaLite"], ["", "postgis", "PostGIS"], ["", "hana", "SAP HANA"],
  ["", "mssql", "MSSQL"], ["", "oracle", "Oracle"], ["", "world", "WMS/WMTS"], ["", "grid", "Vector Tiles"], ["right", "tiles", "XYZ Tiles"],
  ["", "wcs", "WCS"], ["", "world", "WFS / OGC API - Features"],
];

const Tick = styled.input`
  appearance: none;
  flex: none;
  width: 16px;
  height: 16px;
  margin: 0;
  border: 1px solid #bcbcbc;
  background: #fff;
  display: grid;
  place-items: center;
  &:checked::after {
    content: "";
    width: 5px;
    height: 10px;
    border: solid #111;
    border-width: 0 2px 2px 0;
    transform: rotate(35deg);
    margin-bottom: 2px;
  }
`;
const LayerRow = styled.li`
  position: relative;
  height: 22px;
  display: flex;
  align-items: center;
  padding-left: 28px;
  background: ${(p) => (p.$active ? "#ededed" : "transparent")};
  label {
    display: flex;
    align-items: center;
    gap: 6px;
    margin-left: 7px;
    font-weight: 700;
    white-space: nowrap;
    font-style: ${(p) => (p.$on ? "normal" : "italic")};
    color: ${(p) => (p.$on ? "#111" : "#808080")};
    text-decoration: ${(p) => (p.$active ? "underline" : "none")};
  }
`;
const MemoryBadge = styled.span`
  position: absolute;
  right: 8px;
  top: 2px;
  width: 18px;
  height: 18px;
  display: grid;
  place-items: center;
  background: #f0f0f0;
  border-radius: 3px;
`;
const layers = [
  ["swLime", "Extracted (location)", false], ["swTan", "amenity_hospital_healthcare", false, true],
  ["swHospital", "amenity_hospital_healthcare", true, true, true], ["swPath", "Shortest path", false],
  ["swRoad", "Extracted (location)", true], ["swBlue", "Matching features", true],
  ["swYellow", "gis_osm_roads_free_1", false], ["swPink", "gadm36_FRA_4", false],
];

/* ---------- map ---------- */

const Canvas = styled.div`
  flex: 1;
  min-width: 0;
  margin-top: 1px;
  background: #fff;
  border: solid #b5b5b5;
  border-width: 1px 0;
  overflow: hidden;
  svg { width: 100%; height: 100%; }
`;

const boundary = "M504 776L509 788 533 836 594 869 813 902 941 891 1056 934 1304 893 1614 1026 1612 963 1682 887 1721 857 1576 806 1561 780 1556 765";
const mainRoads = [
  "M520 810L537 823 588 836 606 827 629 806 614 793 596 788 592 776", "M629 806L667 793 700 776", "M588 865L643 842 653 830 669 812",
  "M605 828L633 845", "M643 842L704 823 761 807 802 800", "M663 852L720 837 786 810", "M680 858L729 842 798 815", "M688 870L745 847 802 823",
  "M696 878L761 852 794 837", "M627 863L643 865 667 852", "M667 857L680 873 690 884", "M629 806L675 812 712 800", "M667 795L675 812 690 805 682 792",
  "M1514 776L1514 787 1512 820 1504 853 1516 873Q1543 885 1549 903L1553 933 1559 953 1571 967", "M1512 820L1555 817Q1600 825 1608 840L1630 853 1634 870Q1634 885 1620 897L1601 922 1573 945",
  "M1569 827L1568 847 1535 890 1508 920 1480 943", "M1417 887L1476 903 1514 915 1551 935 1603 963", "M1476 897Q1500 885 1535 890", "M1480 943L1531 973 1555 993 1575 997",
  "M1632 880L1654 882 1664 892", "M1634 858L1650 862 1676 873 1670 884 1660 880", "M1593 991L1612 987", "M1427 925L1440 917 1480 943", "M1330 847L1417 883 1448 867 1472 838",
  "M1361 900L1413 925", "M1345 890L1400 880 1425 915", "M1417 883L1470 872 1504 855", "M1460 890L1465 915", "M1601 922L1608 926", "M1470 930L1460 925",
  "M1210 776L1222 870 1228 895", "M1222 870L1300 885", "M1060 925L1070 870 1056 790", "M802 776L805 860 813 895", "M805 835L860 838", "M1300 890L1290 776", "M1440 815L1460 835 1512 850",
  "M1535 820L1530 845 1512 850", "M1555 817L1545 848 1530 845", "M1480 943L1470 960 1478 964M1495 953L1505 970M1520 968L1532 987",
];
const sectors = [
  { clip: "690,765 800,765 806,804 712,812", cx: 750, cy: 785, a: -20, u: 14, v: 10, keep: 0.62 },
  { clip: "690,880 806,826 900,850 941,888 813,899", cx: 810, cy: 860, a: -28, u: 19, v: 14, keep: 0.55 },
  { clip: "800,765 900,765 900,850 800,835", cx: 850, cy: 800, a: 4, u: 17, v: 14, keep: 0.7 },
  { clip: "895,765 1070,765 1068,880 1025,918 941,889 890,862", cx: 980, cy: 830, a: 38, u: 14, v: 11, keep: 0.78 },
  { clip: "1065,765 1215,765 1225,892 1150,905 1060,925 1066,870", cx: 1140, cy: 830, a: 12, u: 14, v: 10, keep: 0.8 },
  { clip: "1212,765 1300,765 1306,888 1228,895", cx: 1260, cy: 830, a: -8, u: 13, v: 11, keep: 0.72 },
  { clip: "1298,765 1420,765 1425,880 1400,915 1370,918 1304,890", cx: 1360, cy: 840, a: 35, u: 15, v: 10, keep: 0.78 },
  { clip: "1415,765 1575,765 1578,806 1515,808 1510,850 1450,870 1420,880", cx: 1470, cy: 810, a: -25, u: 14, v: 11, keep: 0.68 },
];
/* A jittered lattice per district; a fixed seed keeps the streets stable. */
const streets = sectors.map((s, n) => {
  let seed = 977 + n * 131;
  const rnd = () => { seed = (seed * 16807) % 2147483647; return seed / 2147483647; };
  const t = (s.a * Math.PI) / 180;
  const pts = [];
  for (let i = -10; i <= 10; i++) {
    pts.push([]);
    for (let j = -14; j <= 14; j++) {
      const x = (i + (rnd() - 0.5) * 0.8) * s.u;
      const y = (j + (rnd() - 0.5) * 0.7) * s.v;
      pts[i + 10].push([Math.round(s.cx + x * Math.cos(t) - y * Math.sin(t)), Math.round(s.cy + x * Math.sin(t) + y * Math.cos(t))]);
    }
  }
  let d = "";
  pts.forEach((col, i) => col.forEach((p, j) => {
    if (pts[i + 1] && rnd() < s.keep) d += `M${p}L${pts[i + 1][j]}`;
    if (col[j + 1] && rnd() < s.keep) d += `M${p}L${col[j + 1]}`;
  }));
  return d;
});
const MapDrawing = () => (
  <svg viewBox="267 171 1653 876" preserveAspectRatio="xMinYMin slice" role="img" aria-label="Street map of Dijon">
    <defs>
      {sectors.map((s, i) => <clipPath id={`district${i}`} key={i}><polygon points={s.clip} /></clipPath>)}
    </defs>
    <path d={boundary} fill="none" stroke="#3778ae" strokeWidth="5" strokeLinejoin="round" />
    {[["#484848", 0], ["#ffffff", 1]].map(([color, inner]) => (
      <g key={color} fill="none" stroke={color} strokeLinecap="round" strokeLinejoin="round">
        {streets.map((d, i) => <path key={i} d={d} clipPath={`url(#district${i})`} strokeWidth={inner ? 4 : 5.6} />)}
        <path d={mainRoads.join("")} strokeWidth={inner ? 4.2 : 5.8} />
      </g>
    ))}
  </svg>
);

/* ---------- attribute table window ---------- */

const Highlight = styled.div`
  position: absolute;
  top: 166px;
  left: 333px;
  right: 215px;
  padding: 0 5px 4px 5px;
  border: 6px solid #00ff2a;
  border-top-width: 5px;
`;
const Dialog = styled.section`
  background: #efefef;
  border: 1px solid #5f6f8c;
  border-top: 0;
`;
const DialogTitle = styled(TitleBar)`
  height: 36px;
  padding: 0 0 2px 8px;
  color: #111;
`;
const DialogTools = styled.div`
  height: 30px;
  display: flex;
  align-items: center;
  padding: 0 2px 2px;
  border-bottom: 1px solid #b0b0b0;
`;
const Grid = styled.table`
  width: 100%;
  table-layout: fixed;
  border-collapse: separate;
  border-spacing: 0;
  background: #fff;
  thead th {
    height: 25px;
    padding: 3px 0 0;
    font-weight: 400;
    text-align: center;
    background: linear-gradient(#fdfdfd, #e9e9e9);
    border-right: 1px solid #c6c6c6;
    border-bottom: 1px solid #a8a8a8;
    overflow: hidden;
  }
  thead th:first-child { border-right: 0; }
  tbody th {
    height: 37px;
    padding: 2px 0 0 2px;
    font-weight: 400;
    text-align: left;
    background: #f4f4f4;
    border-right: 1px solid #b5b5b5;
    border-bottom: 1px solid #b5b5b5;
  }
  td {
    padding: 1px 0 0 3px;
    border-right: 1px solid #c2c2c2;
    border-bottom: 1px solid #b9b9b9;
    overflow: hidden;
    white-space: nowrap;
  }
  tbody tr:nth-child(even) td { background: #e7e7e4; }
`;
const Col = styled.col`
  width: ${(p) => p.$w}px;
`;
const Clipped = styled.div`
  display: flex;
  justify-content: flex-end;
  padding-right: ${(p) => (p.$head ? 22 : 9)}px;
`;
const Null = styled.i`
  color: #8c8c8c;
`;
const Rest = styled.div`
  height: 19px;
  background: #fff;
  border-left: 23px solid #f0f0f0;
`;
const DialogFoot = styled.footer`
  height: 34px;
  display: flex;
  align-items: center;
  gap: 2px;
  padding: 0 2px 0 3px;
  border-top: 1px solid #b5b5b5;
`;
const FilterButton = styled.button`
  height: 27px;
  padding: 0 2px 0 3px;
  gap: 3px;
  margin-right: auto;
  font-size: 13px;
  color: #111;
  border: 1px solid #b0b0b0;
  border-radius: 2px;
  background: linear-gradient(#fff, #f0f0f0);
  svg:last-child { align-self: flex-end; margin-bottom: 3px; }
`;
const ViewButton = styled.button`
  width: 26px;
  height: 26px;
  background: ${(p) => (p.$on ? "#d2d2d2" : "transparent")};
  box-shadow: ${(p) => (p.$on ? "inset 0 0 0 1px #b0b0b0" : "none")};
`;
const Pointer = styled.span`
  position: absolute;
  top: 21px;
  right: 6px;
`;
const dialogTools = ["pencil", "-saveEdits", "-save", "|", "-addPoints", "-trash", "-cut", "-copy", "-paste", "|", "expression", "selectAll", "invert", "deselectSmall", "funnel", "moveTop", "panTo", "zoomTo", "|", "-newField", "-newField", "editField", "abacus", "|", "conditional", "|", "dock", "actionMenu"];
const columns = ["ref:FR:FINESS", "phone", "fax", "name", "entrance", "operator", "luminous", "animated", "advertising", "barrier"];
const rows = [
  { barrier: "gate" },
  { operator: "JCDecaux", luminous: "yes", animated: "yes", advertising: "billboard" },
  { barrier: "gate" }, { barrier: "lift_gate" }, { barrier: "gate" }, { barrier: "gate" },
  { name: "Entrée 12", entrance: "yes" }, { name: "Entrée 1", entrance: "yes" }, { barrier: "lift_gate" },
  { siret: "006800085", "ref:FR:FINESS": "210010633", phone: "+33380451523", fax: "+33380459752" },
  { siret: "006800168", "ref:FR:FINESS": "210010567", phone: "+33380280610", fax: "+33380280616", name: "Hôpital de jour ..." },
  { name: "Unité de Soins ..." },
];

/* ---------- status bar ---------- */

const Status = styled.footer`
  height: 30px;
  display: flex;
  align-items: center;
  padding: 2px 7px 0 4px;
  font-size: 12px;
  input, select { font-size: 12px; }
  label { margin-right: 4px; }
`;
const Field = styled.span`
  height: 26px;
  width: ${(p) => p.$w}px;
  display: flex;
  align-items: center;
  margin-right: ${(p) => p.$after || 0}px;
  margin-left: ${(p) => p.$before || 0}px;
  border: 1px solid #b4b4b4;
  border-radius: 2px;
  background: #fff;
  overflow: hidden;
  svg { margin: 0 4px 0 9px; }
  input, select {
    flex: 1;
    min-width: 0;
    height: 24px;
    padding: 0 0 0 4px;
    border: 0;
    appearance: none;
    background: transparent;
    color: #111;
  }
  select + svg { margin-right: 8px; }
  input::placeholder { color: #858585; opacity: 1; }
`;
const Spin = styled.span`
  width: 15px;
  height: 24px;
  border-left: 1px solid #c4c4c4;
  display: flex;
  flex-direction: column;
  justify-content: space-around;
  align-items: center;
  button svg { margin: 0; }
`;
const Message = styled.span`
  flex: 1;
  padding-left: 9px;
`;
const StatusIcon = styled.span`
  width: ${(p) => p.$w}px;
  display: flex;
  justify-content: center;
`;
const Spinner = () => (
  <Spin>
    <button aria-label="Increase"><Icon name="up" size={9} /></button>
    <button aria-label="Decrease"><Icon name="down" size={9} /></button>
  </Spin>
);

export default function App() {
  return (
    <Page>
      <Global />
      <TitleBar>
        <Icon name="logo" size={20} />
        <Title>*network_analysis — QGIS</Title>
        <WindowButton aria-label="Minimize"><Icon name="min" size={18} /></WindowButton>
        <WindowButton aria-label="Restore"><Icon name="restore" size={18} /></WindowButton>
        <WindowButton aria-label="Close"><Icon name="close" size={18} /></WindowButton>
      </TitleBar>
      <MenuBar>
        {menus.map((m) => {
          const [a, b] = m.split("_");
          return <MenuItem key={m}><span>{a}<u>{b[0]}</u>{b.slice(1)}</span></MenuItem>;
        })}
      </MenuBar>
      <Toolbar><Tools items={rowOne} /></Toolbar>
      <Toolbar><Tools items={rowTwo} /></Toolbar>
      <Toolbar><Tools items={rowThree} /></Toolbar>
      <Body>
        <Side>
          <Dock>
            <DockHead>
              <h2>Browser</h2>
              <button aria-label="Float Browser"><Icon name="float" size={12} /></button>
              <button aria-label="Close Browser"><Icon name="dockClose" size={12} /></button>
            </DockHead>
            <DockTools><SmallTools items={["addLayer", "refresh", "funnel", "collapse", "info"]} /></DockTools>
            <ListBox>
              <ListMain>
                <Tree $clip>
                  {tree.map(([arrow, icon, text, nested]) => (
                    <TreeRow key={text} $nested={nested} $leaf={!arrow}>
                      <Icon name={arrow || "right"} size={11} />
                      <TreeIcon><Icon name={icon} size={20} /></TreeIcon>
                      {text}
                    </TreeRow>
                  ))}
                </Tree>
                <Scroll vertical size="300px" />
              </ListMain>
              <Scroll size="186px" end />
            </ListBox>
          </Dock>
          <Dock $grow>
            <DockHead>
              <h2>Layers</h2>
              <button aria-label="Float Layers"><Icon name="float" size={12} /></button>
              <button aria-label="Close Layers"><Icon name="dockClose" size={12} /></button>
            </DockHead>
            <DockTools><SmallTools items={["brush", "group", "eye", "funnelMenu", "epsilon+", "expand", "collapse", "removeLayer"]} /></DockTools>
            <ListBox>
              <ListMain>
                <Tree>
                  {layers.map(([swatch, text, on, memory, active], i) => (
                    <LayerRow key={i} $on={on} $active={active}>
                      <Tick type="checkbox" id={`layer${i}`} defaultChecked={on} />
                      <label htmlFor={`layer${i}`}><Icon name={swatch} size={19} />{text}</label>
                      {memory && <MemoryBadge><Icon name="chip" size={16} /></MemoryBadge>}
                    </LayerRow>
                  ))}
                </Tree>
              </ListMain>
              <Scroll size="147px" />
            </ListBox>
          </Dock>
        </Side>
        <Canvas><MapDrawing /></Canvas>
      </Body>
      <Status>
        <Field $w={231}>
          <Icon name="search" size={17} />
          <input aria-label="Locate" placeholder="Type to locate (Ctrl+K)" />
        </Field>
        <Message>Toggles the editing state of the current layer</Message>
        <label htmlFor="coord">Coordinate</label>
        <Field $w={103}><input id="coord" defaultValue="4.9430,47.3148" /></Field>
        <StatusIcon $w={34}><Icon name="mouse" size={21} /></StatusIcon>
        <StatusIcon $w={4} />
        <label htmlFor="scale">Scale</label>
        <Field $w={92}>
          <select id="scale"><option>1:27141</option></select>
          <Icon name="down" size={11} />
        </Field>
        <StatusIcon $w={39}><Icon name="lock" size={19} /></StatusIcon>
        <label htmlFor="magnifier">Magnifier</label>
        <Field $w={91} $after={10}><input id="magnifier" defaultValue="100%" /><Spinner /></Field>
        <label htmlFor="rotation">Rotation</label>
        <Field $w={86} $before={4} $after={8}><input id="rotation" defaultValue="0.0 °" /><Spinner /></Field>
        <Tick type="checkbox" id="render" defaultChecked />
        <StatusIcon $w={7} />
        <label htmlFor="render">Render</label>
        <StatusIcon $w={30}><Icon name="crs" size={19} /></StatusIcon>
        <span>EPSG:4326</span>
        <StatusIcon $w={31} />
        <Icon name="messages" size={20} />
      </Status>

      <Highlight>
        <Dialog>
          <DialogTitle>
            <Icon name="logo" size={20} />
            <Title as="h2" $wide>amenity_hospital_healthcare_hospital_Dijon — Features Total: 12, Filtered: 12, Selected: 0</Title>
            <WindowButton $tall aria-label="Minimize table"><Icon name="min" size={18} /></WindowButton>
            <WindowButton $tall aria-label="Maximize table"><Icon name="max" size={16} /></WindowButton>
            <WindowButton $tall $danger aria-label="Close table"><Icon name="close" size={16} /></WindowButton>
          </DialogTitle>
          <DialogTools><SmallTools items={dialogTools} /></DialogTools>
          <Grid>
            <colgroup>
              <Col $w={23} />
              <Col $w={75} />
              {columns.map((c) => <col key={c} />)}
            </colgroup>
            <thead>
              <tr>
                <th aria-label="Row" />
                <th><Clipped $head>FR:SIRET</Clipped></th>
                {columns.map((c) => <th key={c}>{c}</th>)}
              </tr>
            </thead>
            <tbody>
              {rows.map((r, i) => (
                <tr key={i}>
                  <th>{i + 1}</th>
                  <td><Clipped>{r.siret}</Clipped></td>
                  {columns.map((c) => <td key={c}>{r[c] || <Null>NULL</Null>}</td>)}
                </tr>
              ))}
            </tbody>
          </Grid>
          <Rest />
          <Scroll before size="820px" />
          <DialogFoot>
            <FilterButton><Icon name="tableGrid" size={18} />Show All Features<Icon name="down" size={8} /></FilterButton>
            <ViewButton aria-label="Form view"><Icon name="form" size={18} /></ViewButton>
            <ViewButton $on aria-label="Table view"><Icon name="tableGrid" size={18} /></ViewButton>
          </DialogFoot>
        </Dialog>
        <Pointer><Icon name="cursor" size={24} /></Pointer>
      </Highlight>
    </Page>
  );
}
